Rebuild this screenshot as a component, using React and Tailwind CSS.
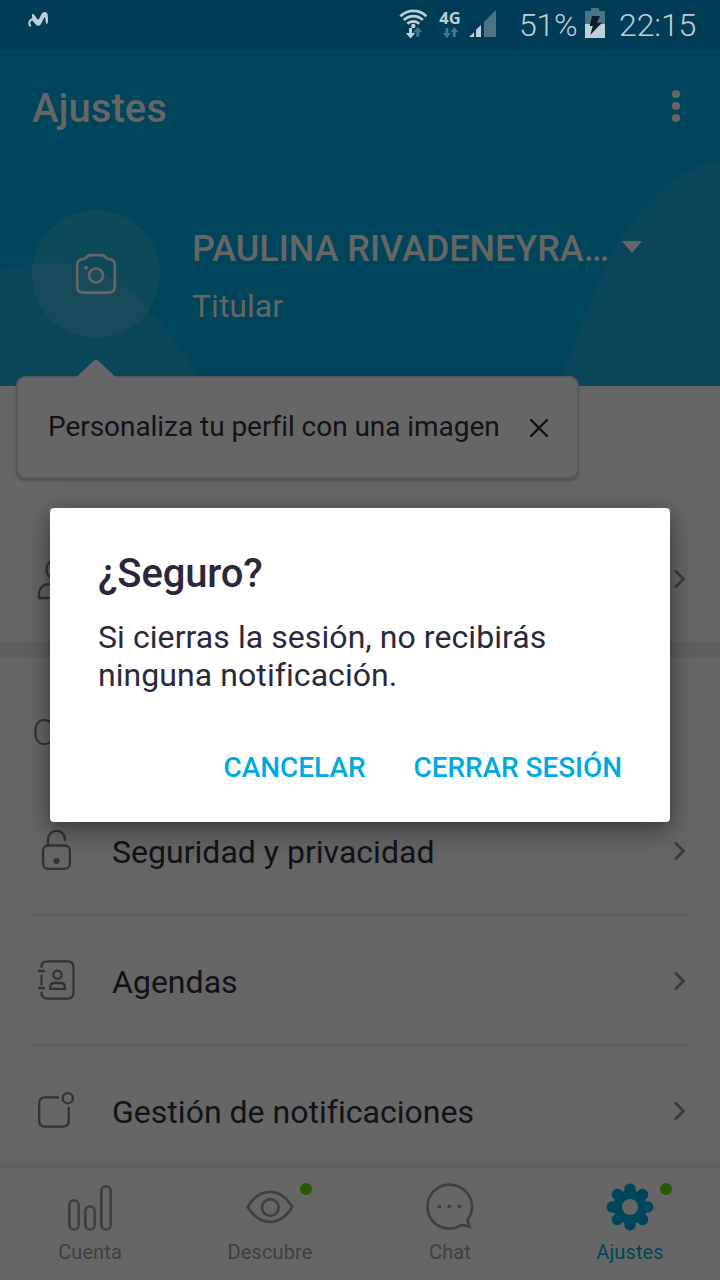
import React from "react";

function StatusBar() {
  return (
    <div className="flex h-[50px] shrink-0 items-center bg-[#003c55] text-[#bfced7]">
      <svg className="ml-7 w-5 h-[50px]" viewBox="28 0 20 50">
        <path d="M30.200 25.600C28.800 24.500 28.800 21.200 31 19.800C32.200 19 33 19.200 33.600 20.200" fill="none" stroke="#bfced7" strokeWidth="2" strokeLinecap="round" />
        <path d="M31.900 14.500C32.800 13.500 34 14.300 34.800 15.500L37.200 18.900C37.800 19.800 38.600 19.700 39.200 18.700L41.200 14.600C42.400 12.200 45.200 11.200 47 13C48 14.300 48.200 19.500 47.800 22.800C47.500 24.300 46 24.200 45.800 22.800L45.400 18.600C45.200 16.800 44.500 17 43.800 18.400L41.300 23.600C39.800 26.500 37.200 26.600 35.400 24L32.400 20.500Z" fill="#bfced7" />
      </svg>
      <div className="ml-auto flex h-[50px] items-center">
        <svg className="h-[50px] w-7" viewBox="399 0 28 50" fill="none" stroke="#bfced7">
          <path d="M400.3 16.2C408 9.1 418.7 9.1 426.4 16.2" strokeWidth="2.7" />
          <path d="M403.8 20C409.4 14.8 417.3 14.8 422.9 20" strokeWidth="2.7" />
          <path d="M407.4 23.8C410.8 20.6 415.9 20.6 419.3 23.8" strokeWidth="2.7" />
          <circle cx="413.3" cy="26" r="2.2" fill="#bfced7" stroke="none" />
          <path d="M409 28h3v5h3.2l-4.7 5.4l-4.7-5.4h3.2z" fill="#bfced7" stroke="none" />
          <path d="M416.3 36.8h3v-4.6h3l-4.5-5.4l-4.5 5.4h3z" fill="#4c7487" stroke="none" />
        </svg>
        <div className="ml-[11px] flex h-[50px] w-6 flex-col items-center pt-[8px]">
          <span className="font-['Noto_Sans'] text-[16.500px] leading-[19px] font-bold">4G</span>
          <svg className="h-3 w-6" viewBox="438 27 24 12">
            <path d="M445.6 28h2.6v5h2.6l-3.9 5.2l-3.9-5.2h2.6zM453 37v-4.8h-2.6l4-5.2l4 5.2h-2.8v4.8z" fill="#4c7487" />
          </svg>
        </div>
        <svg className="ml-[6px] h-[50px] w-[30px]" viewBox="468 0 30 50">
          <path d="M469 37L474 32.3V37zM476 37V29.7L481 25V37z" fill="#bfced7" />
          <path d="M484 37V22L496 10V37z" fill="#4c7487" />
        </svg>
        <span className="ml-[21px] w-[66px] text-[32px] leading-[50px] whitespace-nowrap tracking-[-0.2px] font-[350]">51%</span>
        <svg className="h-[50px] w-5" viewBox="585 0 20 50">
          <path d="M585 24V11H591V8H599V11H605V24z" fill="#4c7487" />
          <path d="M585 24H605V38H585z" fill="#bfced7" />
          <path d="M592 16H600L597 22.700H602L590.200 35L592.800 26H589.700z" fill="#0b1c26" />
        </svg>
        <span className="mr-[22px] ml-[14px] w-[79px] text-[32px] leading-[50px] whitespace-nowrap tracking-[-0.1px] font-[350]">22:15</span>
      </div>
    </div>
  );
}

function Header() {
  return (
    <header className="relative h-[336px] shrink-0 bg-[#00455b] text-[#666]">
      <svg className="absolute inset-0 h-[336px] w-[720px]" viewBox="0 50 720 336" fill="#0c465a">
        <path d="M0 269C40 260 78 260 106 274C140 291 178 340 204 386H0z" />
        <path d="M558 386C575 340 590 300 606 266C627 219 665 178 708 162H720V386z" />
      </svg>
      <div className="relative flex h-[116px] items-center justify-between pr-[38px] pl-8">
        <h1 className="mt-[2px] text-[40px] leading-[48px] font-medium">Ajustes</h1>
        <svg className="h-9 w-3" viewBox="0 0 12 36" fill="#666">
          <circle cx="6" cy="4" r="4" />
          <circle cx="6" cy="16" r="4" />
          <circle cx="6" cy="28" r="4" />
        </svg>
      </div>
      <div className="relative mt-[44px] flex pl-8">
        <div className="flex size-32 items-center justify-center rounded-full bg-[#666]/15">
          <svg className="size-11" viewBox="74 252 44 44" fill="none" stroke="#666" strokeWidth="2.700">
            <path d="M83.500 259.2C86.800 259.2 86 255.200 90 255.200H102C106 255.200 105.200 259.2 108.500 259.2C112.500 259.2 114.800 261.500 114.800 265.500V286.200C114.800 290.200 112.500 292.700 108.500 292.700H83.500C79.500 292.700 77.200 290.200 77.200 286.200V265.500C77.200 261.500 79.500 259.2 83.500 259.2Z" />
            <circle cx="96" cy="275.500" r="7" />
            <circle cx="86" cy="267.700" r="2" fill="#666" stroke="none" />
          </svg>
        </div>
        <div className="ml-8 pt-[17px]">
          <div className="flex items-center">
            <span className="w-[416px] text-[36px] leading-[44px] font-medium tracking-[-0.05px] whitespace-nowrap">PAULINA RIVADENEYRA…</span>
            <svg className="mb-1 ml-[14px] h-3 w-5" viewBox="0 0 20 12" fill="#666">
              <path d="M0 0H20L10 12z" />
            </svg>
          </div>
          <div className="mt-[16px] text-[32px] leading-[38px]">Titular</div>
        </div>
      </div>
    </header>
  );
}

function Tooltip() {
  return (
    <div className="absolute top-[358px] left-4 w-[563px]">
      <div className="mt-[18px] flex h-[103px] items-center rounded-[9px] border-2 border-[#595959] bg-[#666] pl-[30px] shadow-[0_2px_3px_rgba(0,0,0,0.22)]">
        <span className="-mt-[2px] w-[452px] text-[28px] leading-[34px] tracking-[-0.05px] whitespace-nowrap text-[#13131a] [font-variant-ligatures:common-ligatures]">Personaliza tu perfil con una imagen</span>
        <svg className="ml-[29px] size-5" viewBox="0 0 20 20" fill="none" stroke="#111" strokeWidth="2.4" strokeLinecap="round">
          <path d="M2 2L18 18M18 2L2 18" />
        </svg>
      </div>
      <svg className="absolute top-0 left-[59px] h-[22px] w-[42px]" viewBox="75 358 42 22">
        <path d="M75 378.500L94.500 360Q96 358.400 97.500 360L117 378.500V380H75z" fill="#666" />
      </svg>
    </div>
  );
}

function Chevron() {
  return (
    <svg className="h-[22px] w-4" viewBox="0 0 16 22" fill="none" stroke="#3b3b3b" strokeWidth="2.700">
      <path d="M4 2.500L12.500 11L4 19.500" />
    </svg>
  );
}

function Row({ icon, label, last }) {
  return (
    <div className={last ? "mx-8 flex h-[130px] items-center" : "mx-8 flex h-[130px] items-center border-b-2 border-[#5e5e5e] pt-[2px]"}>
      <svg className="size-12 shrink-0" viewBox="0 0 48 48" fill="none" stroke="#333" strokeWidth="2.300">{icon}</svg>
      <span className="mt-[2px] ml-8 text-[32px] leading-[38px] tracking-[0.02px] whitespace-nowrap text-[#13131a]">{label}</span>
      <div className="mr-px ml-auto"><Chevron /></div>
    </div>
  );
}

const personIcon = (
  <>
    <ellipse cx="24" cy="14.500" rx="9.500" ry="10" />
    <path d="M7 43V39.500C7 32 12 29 18 29H30C36 29 41 32 41 39.500V43z" />
  </>
);

const lockIcon = (
  <>
    <rect x="11.100" y="18.500" width="26.800" height="23.300" rx="5" />
    <path d="M16 18.500V13C16 1 33 1 33 12.500V13" strokeLinecap="round" />
    <circle cx="24.500" cy="34" r="3" fill="#333" stroke="none" />
  </>
);

const agendaIcon = (
  <g transform="translate(0 -1.200)">
    <path d="M9.500 12V11C9.500 7.500 11.500 5.500 15.500 5.500H35.500C39.500 5.500 41.500 7.500 41.500 11.500V36.500C41.500 40.500 39.500 42.800 35.500 42.800H15.500C11.500 42.800 9.500 40.500 9.500 37V36M9.500 19V29.500M6 15.200H13M6 32.200H13" />
    <circle cx="25.500" cy="19" r="4.100" />
    <path d="M18.200 33V31.500C18.200 28.500 20 27.200 22.500 27.200H28.500C31 27.200 32.800 28.500 32.800 31.500V33z" />
  </g>
);

const noticeIcon = (
  <>
    <path d="M27 10.300H13.200C9.200 10.300 7.200 12.300 7.200 16.300V33.500C7.200 37.500 9.200 39.600 13.200 39.600H30.800C34.800 39.600 36.800 37.500 36.800 33.500V20" />
    <circle cx="35.800" cy="11.200" r="5.100" />
  </>
);

function NavItem({ icon, label, active, dot }) {
  return (
    <div className={active ? "relative flex flex-1 flex-col items-center pt-[15px] text-[#00455b]" : "relative flex flex-1 flex-col items-center pt-[15px] text-[#404040]"}>
      <svg className="size-12" viewBox="0 0 48 48" fill="none" stroke="currentColor" strokeWidth="2.7">{icon}</svg>
      <span className="mt-[9px] text-[20px] leading-6 tracking-[0.1px]">{label}</span>
      {dot && <span className="absolute top-[15px] left-[120px] size-3 rounded-full bg-[#2a5a00]" />}
    </div>
  );
}

const barsIcon = (
  <>
    <rect x="3.300" y="17.300" width="9.400" height="29.200" rx="4.700" />
    <rect x="19.300" y="23.300" width="9.400" height="23.200" rx="4.700" />
    <rect x="35.300" y="3.300" width="9.400" height="43.200" rx="4.700" />
  </>
);

const eyeIcon = (
  <>
    <path d="M1.700 24C14 3.800 34 3.800 46.300 24C34 43.800 14 43.800 1.700 24Z" strokeLinejoin="round" />
    <circle cx="24.300" cy="24.500" r="8.300" />
  </>
);

const chatIcon = (
  <>
    <path d="M41.700 36.500C44.600 33.100 46 28.500 46 23.800C46 11.600 35.700 1.600 23.500 1.600C11.300 1.600 1.400 11.600 1.400 23.800C1.400 36 11.300 45.600 23.500 45.600C28 45.600 31.500 44.500 34.500 42.500C36 41.500 36.800 41.900 43.600 43.800C42.300 38.500 41 37.800 41.700 36.500Z" />
    <g fill="currentColor" stroke="none">
      <circle cx="13.400" cy="23.500" r="1.900" />
      <circle cx="23.400" cy="23.500" r="1.900" />
      <circle cx="33.400" cy="23.500" r="1.900" />
    </g>
  </>
);

const gearIcon = (
  <>
    <circle cx="24" cy="24" r="12.500" strokeWidth="9" />
    <g fill="currentColor" stroke="none">
      {[0, 45, 90, 135, 180, 225, 270, 315].map((a) => (
        <circle key={a} cx="24" cy="6.200" r="5.700" transform={`rotate(${a} 24 24)`} />
      ))}
    </g>
  </>
);

function Dialog() {
  return (
    <div className="absolute top-[508px] left-[50px] flex h-[314px] w-[620px] flex-col rounded bg-white px-12 pt-[42px] text-[#2b283d] shadow-[0_10px_30px_rgba(0,0,0,0.35),0_2px_12px_rgba(0,0,0,0.2)]">
      <h2 className="text-[40px] leading-[48px] font-medium tracking-[-0.15px]">¿Seguro?</h2>
      <p className="mt-5 text-[32px] leading-[38px] tracking-[0.07px] [font-variant-ligatures:common-ligatures]">
        Si cierras la sesión, no recibirás<br />ninguna notificación.
      </p>
      <div className="mt-[57px] flex justify-end gap-12 text-[28px] leading-[34px] font-medium tracking-[-0.06px] whitespace-nowrap text-[#00a9e0]">
        <button>CANCELAR</button>
        <button>CERRAR SESIÓN</button>
      </div>
    </div>
  );
}

export default function App() {
  return (
    <div className="relative flex h-[1280px] w-[720px] flex-col overflow-hidden bg-[#666] font-['Roboto',sans-serif]">
      <StatusBar />
      <Header />
      <main className="min-h-0 flex-1 overflow-hidden">
        <div className="mt-[128px] h-[128px]">
          <Row icon={personIcon} last />
        </div>
        <div className="h-4 bg-[#606060]" />
        <div className="flex h-[128px] items-center pt-[21px] pl-8 text-[36px] leading-[44px] font-light text-[#333]">C</div>
        <Row icon={lockIcon} label="Seguridad y privacidad" />
        <Row icon={agendaIcon} label="Agendas" />
        <Row icon={noticeIcon} label="Gestión de notificaciones" last />
      </main>
      <nav className="relative flex h-28 shrink-0 bg-[#666] shadow-[0_-2px_12px_rgba(0,0,0,0.12)]">
        <NavItem icon={barsIcon} label="Cuenta" />
        <NavItem icon={eyeIcon} label="Descubre" dot />
        <NavItem icon={chatIcon} label="Chat" />
        <NavItem icon={gearIcon} label="Ajustes" active dot />
      </nav>
      <Tooltip />
      <Dialog />
    </div>
  );
}
